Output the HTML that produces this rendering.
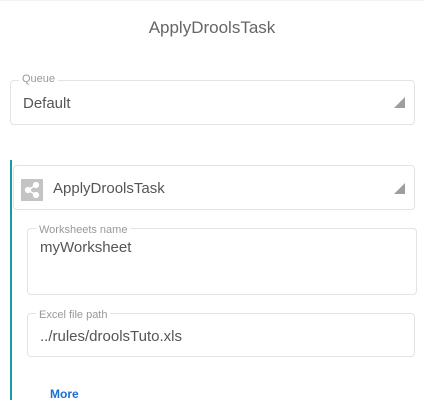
<!DOCTYPE html>
<html><head><style>
body{margin:0;width:424px;height:412px;background:#fff;font-family:"Liberation Sans",sans-serif;position:relative;overflow:hidden;color:#555}
.a{position:absolute}
.box{position:absolute;border:1px solid #e3e3e3;border-radius:4px;box-sizing:border-box}
.lbl{position:absolute;font-size:11px;color:#999;background:#fff;padding:0 3px;line-height:12px}
.val{position:absolute;font-size:15px;color:#555;line-height:16px}
.tri{position:absolute;width:0;height:0;border-left:11px solid transparent;border-bottom:11px solid #9e9e9e}
</style></head><body>
<div class="a" style="left:0;top:0;width:424px;height:1px;background:#f2f2f2"></div>
<div class="a" style="left:0;width:424px;top:18px;text-align:center;font-size:17px;color:#666;line-height:20px">ApplyDroolsTask</div>

<div class="box" style="left:10px;top:80px;width:405px;height:45px"></div>
<div class="lbl" style="left:19px;top:73px">Queue</div>
<div class="val" style="left:23px;top:96px">Default</div>
<div class="tri" style="left:394px;top:97px"></div>

<div class="a" style="left:10px;top:160px;width:2px;height:240px;background:#1a9aa5"></div>

<div class="box" style="left:13px;top:165px;width:402px;height:45px"></div>
<div class="a" style="left:21px;top:179px;width:22px;height:22px;background:#c4c4c4">
<svg width="22" height="22" viewBox="0 0 22 22"><g fill="#fff" stroke="#fff" stroke-width="1.6"><line x1="15" y1="6" x2="7" y2="11"/><line x1="7" y1="11" x2="15" y2="16"/><circle cx="15" cy="6" r="2.3"/><circle cx="7" cy="11" r="2.3"/><circle cx="15" cy="16" r="2.3"/></g></svg>
</div>
<div class="val" style="left:53px;top:181px">ApplyDroolsTask</div>
<div class="tri" style="left:394px;top:183px"></div>

<div class="box" style="left:27px;top:228px;width:390px;height:67px"></div>
<div class="lbl" style="left:36px;top:224px">Worksheets name</div>
<div class="val" style="left:40px;top:240px">myWorksheet</div>

<div class="box" style="left:27px;top:313px;width:388px;height:44px"></div>
<div class="lbl" style="left:36px;top:309px">Excel file path</div>
<div class="val" style="left:40px;top:329px">../rules/droolsTuto.xls</div>

<div class="a" style="left:50px;top:387px;font-size:12px;font-weight:bold;color:#1a6fd0">More</div>
</body></html>
